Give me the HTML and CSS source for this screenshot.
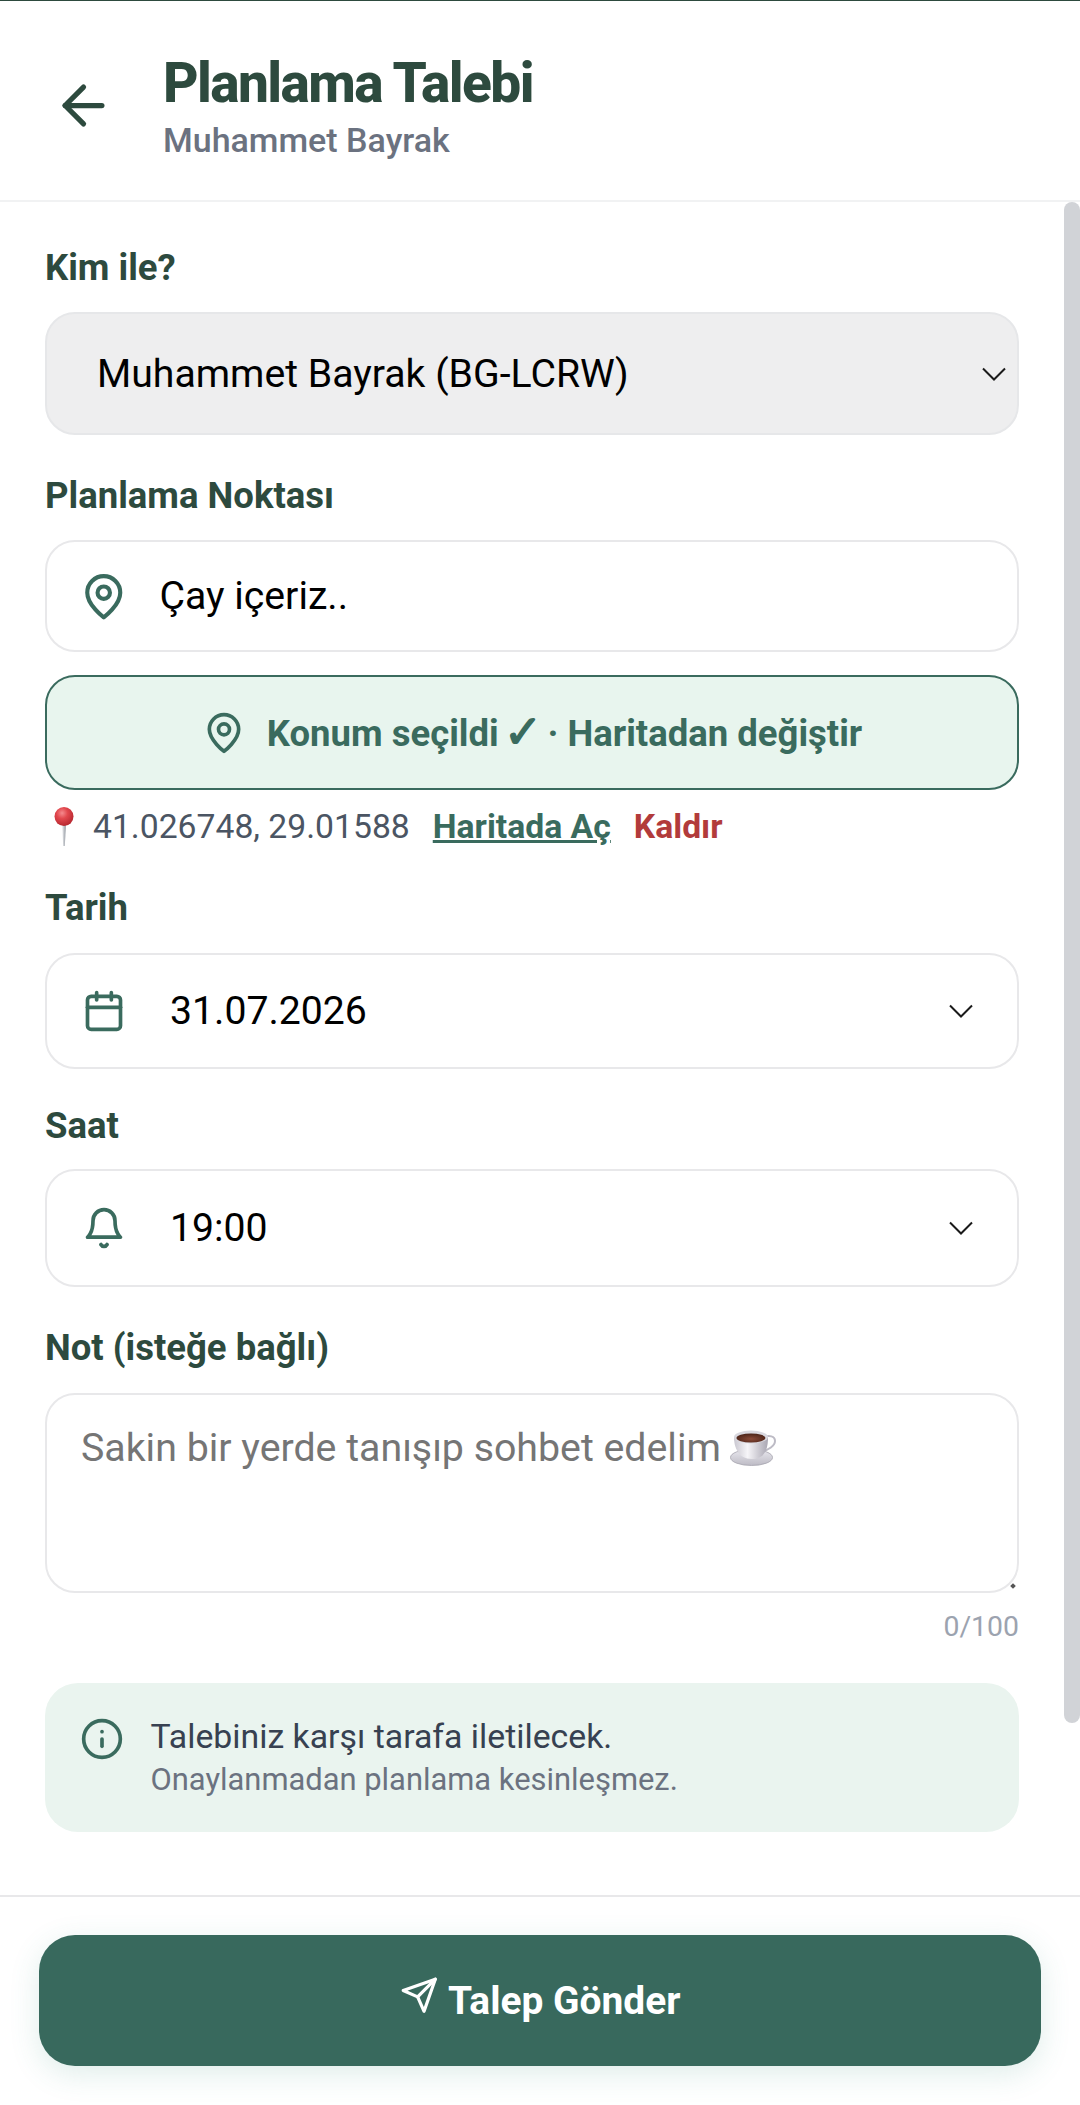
FILE: index.html
```html
<!DOCTYPE html>
<html lang="tr">
<head>
<meta charset="utf-8">
<title>Planlama Talebi</title>
<link rel="stylesheet" href="styles.css">
</head>
<body>
<div class="app">
  <header class="header">
    <svg class="back" viewBox="0 0 24 24"><path d="M19 12H5"/><path d="m12 19-7-7 7-7"/></svg>
    <div class="head-text">
      <h1 class="title">Planlama Talebi</h1>
      <p class="subtitle">Muhammet Bayrak</p>
    </div>
  </header>
  <main class="form">
    <div class="scrollbar"></div>
    <label class="label label-first">Kim ile?</label>
    <div class="select">
      <span>Muhammet Bayrak (BG-LCRW)</span>
      <svg class="chev" viewBox="0 0 24 14"><path d="M1 1.5 12 12.5 23 1.5"/></svg>
    </div>
    <label class="label label-place">Planlama Noktası</label>
    <div class="input input-place">
      <svg class="ico ico-pin" viewBox="0 0 24 24"><path d="M20 10c0 6-8 12-8 12s-8-6-8-12a8 8 0 0 1 16 0Z"/><circle cx="12" cy="10" r="3"/></svg>
      <span class="val val-place">Çay içeriz..</span>
    </div>
    <button class="map-btn" type="button">
      <svg class="ico ico-small" viewBox="0 0 24 24"><path d="M20 10c0 6-8 12-8 12s-8-6-8-12a8 8 0 0 1 16 0Z"/><circle cx="12" cy="10" r="3"/></svg>
      <span class="map-label">Konum seçildi <span class="check">✓</span> · Haritadan değiştir</span>
    </button>
    <div class="coords">
      <svg class="emoji-pin" viewBox="0 0 24 39">
        <defs>
          <radialGradient id="ball" cx="0.4" cy="0.32" r="0.72"><stop offset="0" stop-color="#f58a8e"/><stop offset="0.4" stop-color="#e2484e"/><stop offset="1" stop-color="#b3242d"/></radialGradient>
          <linearGradient id="needle" x1="0" x2="1" y1="0" y2="0"><stop offset="0" stop-color="#f2f3f5"/><stop offset="1" stop-color="#8f959d"/></linearGradient>
        </defs>
        <path d="M10 17h4l-1.2 22h-1.6z" fill="url(#needle)"/>
        <circle cx="12" cy="9.5" r="9.5" fill="url(#ball)"/>
      </svg>
      <span class="coord-text">41.026748, 29.01588</span>
      <a class="open-map">Haritada Aç</a>
      <a class="remove">Kaldır</a>
    </div>
    <label class="label label-date">Tarih</label>
    <div class="input input-date">
      <svg class="ico ico-small" viewBox="0 0 24 24"><path d="M8 2v4"/><path d="M16 2v4"/><rect x="3" y="4" width="18" height="18" rx="2"/><path d="M3 10h18"/></svg>
      <span class="val">31.07.2026</span>
      <svg class="chev chev-row" viewBox="0 0 24 14"><path d="M1 1.5 12 12.5 23 1.5"/></svg>
    </div>
    <label class="label label-time">Saat</label>
    <div class="input input-time">
      <svg class="ico ico-small" viewBox="0 0 24 24"><path d="M6 8a6 6 0 0 1 12 0c0 7 3 9 3 9H3s3-2 3-9"/><path d="M10.3 21a1.94 1.94 0 0 0 3.4 0"/></svg>
      <span class="val">19:00</span>
      <svg class="chev chev-row" viewBox="0 0 24 14"><path d="M1 1.5 12 12.5 23 1.5"/></svg>
    </div>
    <label class="label label-note">Not (isteğe bağlı)</label>
    <div class="textarea">
      <span class="placeholder">Sakin bir yerde tanışıp sohbet edelim</span>
      <svg class="emoji-cup" viewBox="0 0 46 36">
        <defs>
          <linearGradient id="cup" x1="0" x2="1" y1="0" y2="0"><stop offset="0" stop-color="#c9c7d0"/><stop offset="0.4" stop-color="#f6f5f8"/><stop offset="1" stop-color="#a9a6b2"/></linearGradient>
          <linearGradient id="plate" x1="0" x2="0" y1="0" y2="1"><stop offset="0" stop-color="#e9e8ee"/><stop offset="1" stop-color="#bdbbc5"/></linearGradient>
          <radialGradient id="coffee" cx="0.5" cy="0.6" r="0.6"><stop offset="0" stop-color="#8a4a38"/><stop offset="1" stop-color="#4a2318"/></radialGradient>
        </defs>
        <ellipse cx="21.5" cy="27.5" rx="21" ry="8" fill="url(#plate)" stroke="#a6a4ae" stroke-width="0.8"/>
        <path d="M34 7c5-2 11-1 11 4 0 5-7 9-12 10" fill="none" stroke="#bdbbc5" stroke-width="2"/>
        <path d="M4 7c0 10 4 22 18 22S38 17 38 7z" fill="url(#cup)"/>
        <ellipse cx="21" cy="7" rx="17" ry="6.5" fill="#d9d8df"/>
        <ellipse cx="21" cy="8" rx="14.5" ry="4.6" fill="url(#coffee)"/>
      </svg>
      <i class="grip"></i>
    </div>
    <div class="counter">0/100</div>
    <section class="info">
      <svg class="ico info-ico" viewBox="0 0 24 24"><circle cx="12" cy="12" r="10"/><path d="M12 16v-4"/><path d="M12 8h.01"/></svg>
      <div class="info-text">
        <p class="info-main">Talebiniz karşı tarafa iletilecek.</p>
        <p class="info-sub">Onaylanmadan planlama kesinleşmez.</p>
      </div>
    </section>
  </main>
  <footer class="footer">
    <button class="submit" type="button">
      <svg class="send" viewBox="0 0 24 24"><path d="m22 2-7 20-4-9-9-4Z"/><path d="M22 2 11 13"/></svg>
      <span>Talep Gönder</span>
    </button>
  </footer>
</div>
</body>
</html>
```

FILE: styles.css
```css
* { box-sizing: border-box; }
html, body { margin: 0; padding: 0; background: #fff; }
body { font-family: Roboto, "DejaVu Sans", sans-serif; color: #000; }
p, h1 { margin: 0; }
svg { display: block; flex: none; }

.app {
  width: 1080px;
  height: 2105px;
  display: flex;
  flex-direction: column;
  overflow: hidden;
  border-top: 1px solid #2d4a3e;
}

.header {
  height: 201px;
  flex: none;
  display: flex;
  align-items: center;
  padding-left: 52px;
  border-bottom: 2px solid #f1f2f3;
}
.back { width: 63px; height: 63px; margin-top: 10px; fill: none; stroke: #2d4a3e; stroke-width: 2; stroke-linecap: round; stroke-linejoin: round; }
.head-text { margin-left: 48px; margin-top: 9px; }
.title { font-size: 55px; line-height: 66px; font-weight: 800; letter-spacing: -1.6px; color: #2d4a3e; }
.subtitle { font-size: 34px; line-height: 40px; margin-top: 4px; font-weight: 500; color: #6b7280; }

.form {
  flex: 1;
  position: relative;
  padding: 0 61px 0 45px;
}
.scrollbar {
  position: absolute;
  top: 0;
  right: 0;
  width: 16px;
  height: 1521px;
  background: #d1d3d7;
  border-radius: 8px;
}

.label { display: block; height: 44px; line-height: 44px; font-size: 36.5px; font-weight: 700; color: #2d4a3e; margin-bottom: 23px; }
.label-first { margin-top: 44px; margin-bottom: 22px; }
.label-place { margin-top: 39px; margin-bottom: 22px; }
.label-date { margin-top: 38px; margin-bottom: 23px; }
.label-time { margin-top: 35px; margin-bottom: 21px; }
.label-note { margin-top: 39px; margin-bottom: 23px; }

.select {
  height: 123px;
  display: flex;
  align-items: center;
  justify-content: space-between;
  padding: 0 11px 0 50px;
  background: #eeeeef;
  border: 2px solid #e6e7e9;
  border-radius: 30px;
  font-size: 39.2px;
}
.chev { width: 24px; height: 14px; fill: none; stroke: #1a1a1a; stroke-width: 2; }
.chev-row { margin-left: auto; margin-right: 44px; }

.input {
  display: flex;
  align-items: center;
  padding-left: 34.5px;
  border: 2px solid #e8e8ea;
  border-radius: 30px;
  background: #fff;
  font-size: 39.2px;
}
.input-place { height: 112px; padding-left: 32px; }
.input-date { height: 116px; }
.input-time { height: 118px; }

.ico { fill: none; stroke: #3a6b5e; stroke-width: 2; stroke-linecap: round; stroke-linejoin: round; }
.ico-pin { width: 49.5px; height: 49.5px; margin-top: 1px; }
.ico-small { width: 44px; height: 44px; }
.val { margin-left: 44.5px; }
.val-place { margin-left: 31px; }

.map-btn {
  width: 100%;
  height: 115px;
  margin-top: 23px;
  display: flex;
  align-items: center;
  justify-content: center;
  gap: 21px;
  background: #e8f5ee;
  border: 2px solid #3a6b5e;
  border-radius: 30px;
  font-family: inherit;
  font-size: 36.5px;
  font-weight: 700;
  color: #3a6b5e;
  padding: 0;
}
.map-label { padding-top: 2px; }
.check {
  display: inline-block;
  margin: 0 -4px;
  font-family: "DejaVu Sans", sans-serif;
  font-size: 46px;
  line-height: 0;
  vertical-align: -2px;
  -webkit-text-stroke: 1.4px #3a6b5e;
}

.coords {
  height: 44px;
  margin-top: 14px;
  display: flex;
  align-items: center;
  padding-left: 7px;
  font-size: 33.7px;
  color: #4b5563;
}
.emoji-pin { width: 24px; height: 39px; }
.coord-text { margin-left: 17px; }
.open-map { margin-left: 23px; font-weight: 700; color: #3a6b5e; text-decoration: underline; }
.remove { margin-left: 23px; font-weight: 700; color: #b23b3b; }

.textarea {
  height: 200px;
  position: relative;
  display: flex;
  align-items: flex-start;
  padding: 30px 0 0 34px;
  border: 2px solid #e8e8ea;
  border-radius: 30px;
  font-size: 39.3px;
  color: #757575;
}
.placeholder { line-height: 46px; }
.emoji-cup { width: 46px; height: 36px; margin: 5px 0 0 9px; }
.grip {
  position: absolute;
  right: 2px;
  bottom: 3px;
  width: 4px;
  height: 4px;
  background: #555;
  transform: rotate(45deg);
}

.counter { height: 40px; line-height: 40px; margin-top: 14px; text-align: right; font-size: 28.4px; color: #9ca3af; }

.info {
  height: 149px;
  margin-top: 36px;
  display: flex;
  align-items: flex-start;
  padding: 34px 0 0 34.5px;
  background: #eaf4ef;
  border-radius: 33px;
}
.info-ico { width: 44px; height: 44px; }
.info-text { margin-left: 27px; margin-top: -2px; }
.info-main { font-size: 33.8px; line-height: 44px; color: #374151; }
.info-sub { font-size: 30.9px; line-height: 42px; color: #6b7280; }

.footer {
  flex: none;
  height: 210px;
  padding: 38px 39px 0;
  border-top: 2px solid #e8e8ea;
  background: #fff;
}
.submit {
  width: 100%;
  height: 131px;
  display: flex;
  align-items: center;
  justify-content: center;
  gap: 10px;
  border: 0;
  border-radius: 36px;
  background: #38695d;
  box-shadow: 0 8px 30px rgba(58, 140, 125, 0.16);
  color: #fff;
  font-family: inherit;
  font-size: 38.9px;
  font-weight: 700;
  padding: 0;
}
.send { width: 38.5px; height: 38.5px; margin-top: -10px; fill: none; stroke: #fff; stroke-width: 2; stroke-linecap: round; stroke-linejoin: round; }
```
